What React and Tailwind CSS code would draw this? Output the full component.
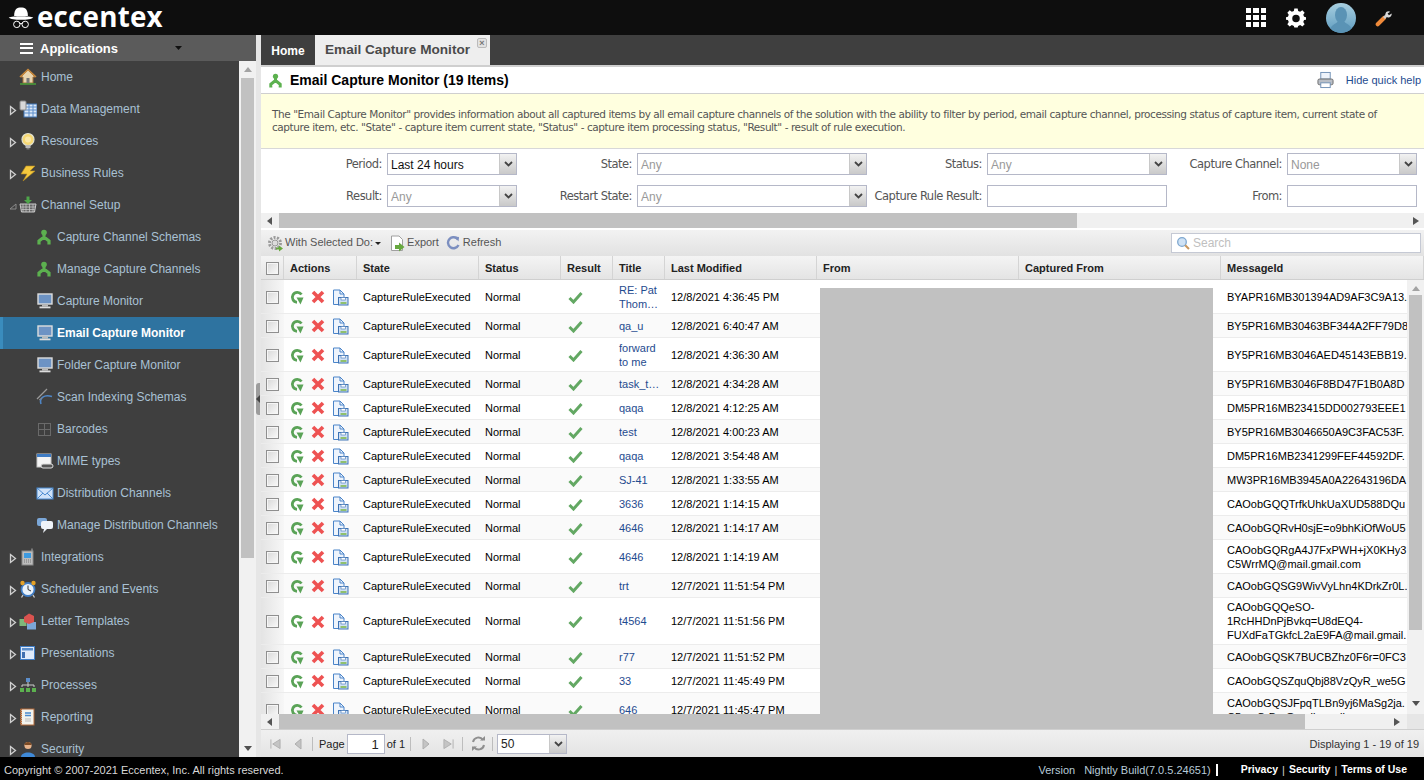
const F = "font-['Liberation_Sans',Arial,sans-serif]";

/* ---------- small drawn icons ---------- */
const Hat = () => (
  <svg width="26" height="25" viewBox="0 0 34 32" className="shrink-0">
    <path d="M8 14 C8 5 12 3 17 3 C22 3 26 5 26 14 Z" fill="#fff" />
    <path d="M1 16 C6 14 28 14 33 16 C30 20 4 20 1 16 Z" fill="#fff" />
    <circle cx="11.5" cy="25" r="4.2" fill="none" stroke="#fff" strokeWidth="1.3" />
    <circle cx="22.5" cy="25" r="4.2" fill="none" stroke="#fff" strokeWidth="1.3" />
    <path d="M15.5 24 H18.5" stroke="#fff" strokeWidth="1.3" />
  </svg>
);
const Arrow = ({ open }) =>
  open ? (
    <svg width="8" height="8" viewBox="0 0 8 8"><path d="M1 7 L7 2 V7 Z" fill="none" stroke="#8a8a8a" /></svg>
  ) : (
    <svg width="8" height="11" viewBox="0 0 8 11"><path d="M1.5 1.5 L6.5 5.5 L1.5 9.5 Z" fill="#4a4a4a" stroke="#d0d0d0" strokeWidth="1.3" /></svg>
  );
const Ico = ({ children }) => (
  <svg width="18" height="18" viewBox="0 0 18 18" className="shrink-0">{children}</svg>
);
const HomeI = () => (
  <Ico>
    <path d="M2 9 L9 2 L16 9 L14 9 L14 15 L4 15 L4 9 Z" fill="#e8d5b0" stroke="#a8753a" />
    <path d="M1 9 L9 1.5 L17 9" fill="none" stroke="#c98a3e" strokeWidth="1.6" />
    <rect x="7.5" y="10" width="3" height="5" fill="#777" />
    <path d="M1 16 H17" stroke="#4a9a3a" strokeWidth="1.6" />
  </Ico>
);
const DataI = () => (
  <Ico>
    <rect x="5" y="4" width="13" height="13" fill="#dbe8f7" stroke="#3f74b5" />
    <path d="M5 7 H18 M5 10 H18 M5 13 H18 M10 4 V17 M14 4 V17" stroke="#5c8ecb" />
    <rect x="1" y="1" width="6" height="9" rx="1" fill="#d8d8d8" stroke="#8a8a8a" />
  </Ico>
);
const BulbI = () => (
  <Ico>
    <circle cx="9" cy="7.5" r="6" fill="#f6d873" stroke="#e2e2d0" strokeWidth="1.2" />
    <circle cx="9" cy="7.5" r="3" fill="#fbe9a8" />
    <rect x="6.5" y="13" width="5" height="3" fill="#b8b8b8" />
    <rect x="7.5" y="16" width="3" height="1.5" fill="#777" />
  </Ico>
);
const BoltI = () => (
  <Ico>
    <path d="M7 2 H16 L11 7 H16 L4 17 L8 10 H2 Z" fill="#f5c93e" stroke="#b58a1e" strokeWidth=".6" />
  </Ico>
);
const BasketI = () => (
  <Ico>
    <path d="M1 8 H17 L15.5 16 H2.5 Z" fill="#666" stroke="#ccc" />
    <path d="M4 8 V16 M7 8 V16 M10.5 8 V16 M14 8 V16 M2 11 H16 M2.5 13.5 H15.5" stroke="#ccc" strokeWidth=".7" />
    <path d="M7.5 0.5 H10.5 V4 H13 L9 8 L5 4 H7.5 Z" fill="#4ea64a" />
  </Ico>
);
const SchemaI = ({ s = 16 }) => (
  <svg width={s} height={s} viewBox="0 0 16 16" className="shrink-0">
    <circle cx="8" cy="3.5" r="2.8" fill="#5cb14f" />
    <path d="M8 5 V8 M8 8 L3 12 V15.5 M8 8 L13 12 V15.5" fill="none" stroke="#5cb14f" strokeWidth="3.2" />
  </svg>
);
const MonitorI = () => (
  <Ico>
    <rect x="2" y="2" width="14" height="10" fill="#6d93c4" stroke="#ddd" strokeWidth="1.4" />
    <rect x="6" y="12.5" width="6" height="2" fill="#bbb" />
    <rect x="3.5" y="14.5" width="11" height="1.8" fill="#ddd" />
  </Ico>
);
const ScanI = () => (
  <Ico>
    <path d="M1 11 L11 1" stroke="#9a9a9a" strokeWidth="1.2" />
    <path d="M5 16 C3 10 8 6 16 8.5" fill="none" stroke="#4f86c6" strokeWidth="1.6" />
    <path d="M3 12 L6 10" stroke="#888" />
  </Ico>
);
const BarcodeI = () => (
  <Ico>
    <rect x="2.5" y="3.5" width="12" height="12" fill="none" stroke="#6a6a6a" />
    <path d="M8.5 3.5 V15.5 M2.5 9.5 H14.5" stroke="#6a6a6a" />
  </Ico>
);
const MimeI = () => (
  <Ico>
    <rect x="1" y="2" width="14" height="13" fill="#f4f4f4" stroke="#c8c8c8" />
    <rect x="1" y="2" width="14" height="3" fill="#3f7cc4" />
    <rect x="5" y="12" width="12" height="4" rx="2" fill="#555" stroke="#ddd" />
  </Ico>
);
const MailI = () => (
  <Ico>
    <rect x="1" y="4" width="16" height="11" fill="#cfe2f8" stroke="#4a8ad0" />
    <path d="M1 4 L9 11 L17 4 M1 15 L7 9 M17 15 L11 9" fill="none" stroke="#4a8ad0" />
  </Ico>
);
const ChatI = () => (
  <Ico>
    <rect x="1" y="2" width="10" height="8" rx="2" fill="#7ba7d8" />
    <rect x="5" y="5" width="12" height="8" rx="2" fill="#eef3f9" />
    <path d="M8 13 L7 17 L11 13 Z" fill="#eef3f9" />
  </Ico>
);
const PhoneI = () => (
  <Ico>
    <rect x="3" y="3" width="11" height="14" fill="#bdbdbd" stroke="#8a8a8a" />
    <rect x="5" y="5" width="7" height="5" fill="#3d9ae0" />
    <path d="M5 12 H12 M5 14 H12" stroke="#777" strokeDasharray="1 1" />
    <path d="M13 3 V0.5" stroke="#999" strokeWidth="1.3" />
  </Ico>
);
const ClockI = () => (
  <Ico>
    <circle cx="9" cy="9.5" r="6.5" fill="#e9f2fb" stroke="#3f7cc4" strokeWidth="1.8" />
    <path d="M9 5.5 V9.5 L12 11" fill="none" stroke="#333" />
    <circle cx="3.5" cy="3" r="2.2" fill="#e5a227" />
    <circle cx="14.5" cy="3" r="2.2" fill="#e5a227" />
    <path d="M4 15 L2.5 17.5 M14 15 L15.5 17.5" stroke="#ccc" strokeWidth="1.3" />
  </Ico>
);
const CubesI = () => (
  <Ico>
    <rect x="0.5" y="7" width="7" height="7" fill="#7fb77a" />
    <rect x="8" y="10" width="9" height="7.5" fill="#7ba7d8" />
    <path d="M5 5 L10 1.5 L15 4 L15 10 L10 12 L5 10 Z" fill="#d9534f" />
  </Ico>
);
const PresI = () => (
  <Ico>
    <rect x="1.5" y="2.5" width="14" height="13" fill="#dfeafa" stroke="#3f7cc4" />
    <rect x="3" y="4" width="11" height="2.5" fill="#5c8ecb" />
    <rect x="3" y="8" width="3" height="6" fill="#3f6fb0" />
  </Ico>
);
const ProcI = () => (
  <Ico>
    <rect x="7" y="2" width="4" height="4" fill="#5c8ecb" />
    <path d="M9 6 V9 M3 11 V9 H15 V11 M9 9 V11" fill="none" stroke="#ccc" />
    <rect x="1" y="12" width="4" height="4" fill="#5cb14f" />
    <rect x="7" y="12" width="4" height="4" fill="#5cb14f" />
    <rect x="13" y="12" width="4" height="4" fill="#5cb14f" />
  </Ico>
);
const BookI = () => (
  <Ico>
    <rect x="2" y="1" width="13" height="16" fill="#f3f3ee" stroke="#b26a3a" />
    <path d="M2 1 V17" stroke="#b26a3a" strokeWidth="2" strokeDasharray="1 1" />
    <path d="M6 5 H12 M6 7.5 H12" stroke="#4a8ad0" strokeWidth="1.3" />
    <path d="M6 11 H12 M6 13 H12" stroke="#bbb" />
  </Ico>
);
const UserI = () => (
  <Ico>
    <circle cx="9" cy="5.5" r="3.6" fill="#e8b48c" />
    <path d="M5.4 5 C5.4 1 12.6 1 12.6 5 Z" fill="#7b4a24" />
    <path d="M2 17 C2 11 16 11 16 17 Z" fill="#3f8ad8" />
  </Ico>
);

/* grid action icons */
const Rerun = () => (
  <svg width="14" height="15" viewBox="0 0 14 15" className="shrink-0 mt-[1px]">
    <path d="M11.5 4.5 A5 5 0 1 0 7 12.3" fill="none" stroke="#5aa357" strokeWidth="2.8" />
    <path d="M6.5 7.5 H13.5 L10.5 14.5 Z" fill="#5aa357" />
  </svg>
);
const Del = () => (
  <svg width="14" height="14" viewBox="0 0 14 14" className="shrink-0 mt-[1px]">
    <path d="M2 2 L12 12 M12 2 L2 12" stroke="#ee5252" strokeWidth="3.6" />
  </svg>
);
const Save = () => (
  <svg width="17" height="17" viewBox="0 0 17 17" className="shrink-0 mt-[1px]">
    <path d="M1.5 1 H8 L12 5 V15.5 H1.5 Z" fill="#eef4fc" stroke="#4a84c9" />
    <path d="M8 1 V5 H12" fill="none" stroke="#4a84c9" />
    <rect x="6.5" y="8.5" width="9.5" height="7.5" fill="#cfe0f5" stroke="#3f74b5" />
    <rect x="9" y="8.5" width="4.5" height="2.5" fill="#fff" stroke="#3f74b5" strokeWidth=".6" />
    <rect x="8.5" y="13" width="6" height="2" fill="#8fc06d" />
  </svg>
);
const Check = () => (
  <svg width="15" height="13" viewBox="0 0 15 13" className="shrink-0 mt-[1px]">
    <path d="M1.5 7 L5.5 11 L13.5 2" fill="none" stroke="#63a863" strokeWidth="3" />
  </svg>
);
const Box = () => (
  <span className="block mt-[1px] w-[13px] h-[13px] border border-[#8f8f8f] bg-gradient-to-br from-[#d8d8d8] to-[#fafafa] shadow-[inset_0_0_0_1px_#f6f6f6]" />
);
const Chev = () => (
  <svg width="9" height="6" viewBox="0 0 9 6"><path d="M1 1 L4.5 4.5 L8 1" fill="none" stroke="#444" strokeWidth="1.8" /></svg>
);

/* ---------- sidebar ---------- */
const menu = [
  ["Home", 0, null, HomeI],
  ["Data Management", 0, "c", DataI],
  ["Resources", 0, "c", BulbI],
  ["Business Rules", 0, "c", BoltI],
  ["Channel Setup", 0, "o", BasketI],
  ["Capture Channel Schemas", 1, null, SchemaI],
  ["Manage Capture Channels", 1, null, SchemaI],
  ["Capture Monitor", 1, null, MonitorI],
  ["Email Capture Monitor", 1, null, MonitorI, true],
  ["Folder Capture Monitor", 1, null, MonitorI],
  ["Scan Indexing Schemas", 1, null, ScanI],
  ["Barcodes", 1, null, BarcodeI],
  ["MIME types", 1, null, MimeI],
  ["Distribution Channels", 1, null, MailI],
  ["Manage Distribution Channels", 1, null, ChatI],
  ["Integrations", 0, "c", PhoneI],
  ["Scheduler and Events", 0, "c", ClockI],
  ["Letter Templates", 0, "c", CubesI],
  ["Presentations", 0, "c", PresI],
  ["Processes", 0, "c", ProcI],
  ["Reporting", 0, "c", BookI],
  ["Security", 0, "c", UserI],
];

const MenuRow = ({ label, child, arrow, Icon, active }) => (
  <div
    className={`h-[32px] shrink-0 flex items-center text-[12px] ${
      active ? "bg-[#2e73a0] border-l-[3px] border-[#3a8cbd] text-white font-bold" : "text-[#a9c1d4]"
    } ${child ? (active ? "pl-[33px]" : "pl-[36px]") : "pl-[9px]"}`}
  >
    {!child && (
      <span className="w-[9px] mr-[1px] flex items-center justify-start mt-[2px]">
        {arrow && <Arrow open={arrow === "o"} />}
      </span>
    )}
    <span className="w-[21px] mr-[0px] flex items-center">
      <Icon />
    </span>
    <span className={`whitespace-nowrap -mt-[1px] ${child ? "" : "ml-[1px]"}`}>{label}</span>
  </div>
);

/* ---------- grid data ---------- */
const rows = [
  [34, ["RE: Pat", "Thom…"], "12/8/2021 4:36:45 PM", ["BYAPR16MB301394AD9AF3C9A13."]],
  [24, ["qa_u"], "12/8/2021 6:40:47 AM", ["BY5PR16MB30463BF344A2FF79D8"]],
  [34, ["forward", "to me"], "12/8/2021 4:36:30 AM", ["BY5PR16MB3046AED45143EBB19."]],
  [24, ["task_t…"], "12/8/2021 4:34:28 AM", ["BY5PR16MB3046F8BD47F1B0A8D"]],
  [24, ["qaqa"], "12/8/2021 4:12:25 AM", ["DM5PR16MB23415DD002793EEE1"]],
  [24, ["test"], "12/8/2021 4:00:23 AM", ["BY5PR16MB3046650A9C3FAC53F."]],
  [24, ["qaqa"], "12/8/2021 3:54:48 AM", ["DM5PR16MB2341299FEF44592DF."]],
  [24, ["SJ-41"], "12/8/2021 1:33:55 AM", ["MW3PR16MB3945A0A22643196DA"]],
  [24, ["3636"], "12/8/2021 1:14:15 AM", ["CAOobGQQTrfkUhkUaXUD588DQu"]],
  [24, ["4646"], "12/8/2021 1:14:17 AM", ["CAOobGQRvH0sjE=o9bhKiOfWoU5"]],
  [34, ["4646"], "12/8/2021 1:14:19 AM", ["CAOobGQRgA4J7FxPWH+jX0KHy3", "C5WrrMQ@mail.gmail.com"]],
  [24, ["trt"], "12/7/2021 11:51:54 PM", ["CAOobGQSG9WivVyLhn4KDrkZr0L."]],
  [47, ["t4564"], "12/7/2021 11:51:56 PM", ["CAOobGQQeSO-", "1RcHHDnPjBvkq=U8dEQ4-", "FUXdFaTGkfcL2aE9FA@mail.gmail."]],
  [24, ["r77"], "12/7/2021 11:51:52 PM", ["CAOobGQSK7BUCBZhz0F6r=0FC3"]],
  [24, ["33"], "12/7/2021 11:45:49 PM", ["CAOobGQSZquQbj88VzQyR_we5G"]],
  [34, ["646"], "12/7/2021 11:45:47 PM", ["CAOobGQSJFpqTLBn9yj6MaSg2ja.", "C5m+O-Bw@mail.gmail.com"]],
];

const cols = [
  ["", 23],
  ["Actions", 73],
  ["State", 122],
  ["Status", 82],
  ["Result", 52],
  ["Title", 52],
  ["Last Modified", 152],
  ["From", 202],
  ["Captured From", 202],
  ["MessageId", 203],
];

const Row = ({ r, i }) => (
  <div
    style={{ height: r[0] }}
    className={`flex shrink-0 border-b border-[#ececec] text-[11px] leading-[14px] text-black ${i % 2 ? "bg-[#fafafa]" : "bg-white"}`}
  >
    <div className="w-[23px] shrink-0 flex items-center justify-center bg-gradient-to-r from-[#e4e4e4] to-[#f7f7f7]"><Box /></div>
    <div className="w-[73px] shrink-0 flex items-center pl-[6px] gap-[7px]"><Rerun /><Del /><Save /></div>
    <div className="w-[122px] shrink-0 flex items-center pl-[6px]">CaptureRuleExecuted</div>
    <div className="w-[82px] shrink-0 flex items-center pl-[6px]">Normal</div>
    <div className="w-[52px] shrink-0 flex items-center pl-[7px]"><Check /></div>
    <div className="w-[52px] shrink-0 flex flex-col justify-center pl-[6px] text-[#1f4b8f]">
      {r[1].map((t) => <span key={t} className="whitespace-nowrap">{t}</span>)}
    </div>
    <div className="w-[152px] shrink-0 flex items-center pl-[6px]">{r[2]}</div>
    <div className="w-[202px] shrink-0" />
    <div className="w-[202px] shrink-0" />
    <div className="w-[203px] shrink-0 flex flex-col justify-center pl-[6px] overflow-hidden">
      {r[3].map((t) => <span key={t} className="whitespace-nowrap">{t}</span>)}
    </div>
  </div>
);

/* ---------- filter fields ---------- */
const LBL = "text-[#555] text-[11.5px] text-right shrink-0 mr-[5px] pt-[1px] whitespace-nowrap font-['DejaVu_Sans',sans-serif] tracking-[-0.5px]";
const Field = ({ label, lw, w, value, combo, dark }) => (
  <div className="flex items-center">
    <span style={{ width: lw }} className={LBL}>{label}</span>
    <div style={{ width: w }} className="h-[22px] border border-[#b5b8c8] bg-white flex items-center text-[12px] overflow-hidden">
      <span className={`pl-[3px] pt-[1px] flex-1 whitespace-nowrap ${dark ? "text-[#111]" : "text-[#999]"}`}>{value}</span>
      {combo && (
        <span className="w-[17px] h-full flex items-center justify-center bg-gradient-to-b from-[#f2f2f2] to-[#c9c9c9] border-l border-[#c8c8c8]"><Chev /></span>
      )}
    </div>
  </div>
);

const HScroll = ({ thumbL, thumbW, right }) => (
  <div className="h-[15px] bg-[#f0f0f0] relative shrink-0">
    <svg width="6" height="8" viewBox="0 0 6 8" className="absolute left-[6px] top-[4px]"><path d="M5 0 V8 L0 4 Z" fill="#555" /></svg>
    <div style={{ left: thumbL, width: thumbW }} className="absolute top-0 bottom-0 bg-[#c1c1c1]" />
    <svg width="6" height="8" viewBox="0 0 6 8" style={{ right }} className="absolute top-[4px]"><path d="M0 0 V8 L6 4 Z" fill="#555" /></svg>
  </div>
);

const Sep = ({ ml }) => <span style={{ marginLeft: ml }} className="w-px h-[14px] bg-[#bdbdbd] shrink-0" />;

export default function App() {
  return (
    <div className={`w-[1424px] h-[780px] overflow-hidden flex flex-col ${F} text-[12px] bg-[#3f3f3f]`}>
      {/* top bar */}
      <header className="h-[35px] shrink-0 bg-[#0e0e0e] flex items-center pl-[8px] pr-[31px]">
        <Hat />
        <span className="ml-[3px] text-white text-[27.8px] leading-[31px] font-bold font-['Open_Sans',sans-serif] -mt-[2px] tracking-[0.2px]">eccentex</span>
        <div className="ml-auto flex items-center">
          <div className="grid grid-cols-3 gap-[2px] w-[20px]">
            {Array.from({ length: 9 }).map((_, i) => <span key={i} className="h-[5.33px] bg-white" />)}
          </div>
          <svg width="20" height="20" viewBox="0 0 24 24" className="ml-[20px]">
            <path fill="#fff" d="M10 1 H14 L14.6 4 L17 5 L19.6 3.3 L22.4 6.1 L20.7 8.7 L21.7 11 L24 11.5 V14.5 L21.7 15 L20.7 17.3 L22.4 19.9 L19.6 22.7 L17 21 L14.6 22 L14 24 H10 L9.4 22 L7 21 L4.4 22.7 L1.6 19.9 L3.3 17.3 L2.3 15 L0 14.5 V11.5 L2.3 11 L3.3 8.7 L1.6 6.1 L4.4 3.3 L7 5 L9.4 4 Z M12 8.5 A4.5 4.5 0 1 0 12 17.5 A4.5 4.5 0 1 0 12 8.5 Z" fillRule="evenodd" transform="translate(0,-0.5)" />
          </svg>
          <svg width="30" height="30" viewBox="0 0 30 30" className="ml-[20px]">
            <defs>
              <linearGradient id="av" x1="0" y1="0" x2="0" y2="1">
                <stop offset="0" stopColor="#a8cfe0" /><stop offset="1" stopColor="#5f9cbf" />
              </linearGradient>
              <clipPath id="avc"><circle cx="15" cy="15" r="15" /></clipPath>
            </defs>
            <circle cx="15" cy="15" r="15" fill="url(#av)" />
            <g clipPath="url(#avc)" fill="#5a93b5">
              <ellipse cx="15" cy="12" rx="6" ry="8" />
              <path d="M3 30 C4 21 11 21 12 18 H18 C19 21 26 21 27 30 Z" />
            </g>
          </svg>
          <svg width="18" height="18" viewBox="0 0 20 20" className="ml-[19px]">
            <path d="M3 17 L10 10" stroke="#ef8a3a" strokeWidth="4.5" strokeLinecap="round" />
            <path d="M10 10 L13 7" stroke="#ccc" strokeWidth="3" />
            <path d="M11.5 6 C11.5 3 14.5 1.5 17 3 L14 5 L15.5 7 L18.5 5 C19 8.5 15 10.5 13 9 Z" fill="#d9d9d9" />
          </svg>
        </div>
      </header>

      <div className="flex-1 flex min-h-0">
        {/* sidebar */}
        <aside className="w-[256px] shrink-0 flex flex-col bg-[#3f3f3f]">
          <div className="h-[26px] shrink-0 bg-[#5b5b5b] flex items-center pl-[20px] text-white font-bold text-[13px]">
            <span className="flex flex-col gap-[2.5px] w-[13px]">
              <i className="block h-[2px] bg-white" /><i className="block h-[2px] bg-white" /><i className="block h-[2px] bg-white" />
            </span>
            <span className="ml-[7px] pt-[2px]">Applications</span>
            <svg width="7" height="4" viewBox="0 0 7 4" className="ml-[57px]"><path d="M0 0 H7 L3.5 4 Z" fill="#111" /></svg>
          </div>
          <div className="flex-1 flex min-h-0">
            <nav className="w-[239px] shrink-0 flex flex-col overflow-hidden">
              {menu.map((m) => (
                <MenuRow key={m[0]} label={m[0]} child={m[1]} arrow={m[2]} Icon={m[3]} active={m[4]} />
              ))}
            </nav>
            <div className="w-[17px] bg-[#f1f1f1] flex flex-col items-center py-[6px] relative">
              <svg width="8" height="5" viewBox="0 0 8 5"><path d="M0 5 L4 0 L8 5 Z" fill="#a3a3a3" /></svg>
              <div className="w-[13px] h-[480px] bg-[#c1c1c1] mt-[6px]" />
              <svg width="8" height="5" viewBox="0 0 8 5" className="absolute bottom-[6px]"><path d="M0 0 L8 0 L4 5 Z" fill="#505050" /></svg>
            </div>
          </div>
        </aside>

        {/* splitter */}
        <div className="w-[5px] shrink-0 bg-[#e6e6e6] relative">
          <span className="absolute left-0 top-[348px] w-[4px] h-[32px] bg-[#9c9c9c] rounded-l-[3px] flex items-center">
            <svg width="4" height="8" viewBox="0 0 4 8"><path d="M4 0 V8 L0 4 Z" fill="#444" /></svg>
          </span>
        </div>

        {/* main */}
        <main className="flex-1 min-w-0 flex flex-col bg-white relative">
          {/* tabs */}
          <div className="h-[30px] shrink-0 bg-[#3f3f3f] flex items-end">
            <div className="w-[54px] h-[29px] flex items-center justify-center text-white font-bold text-[12px]">Home</div>
            <div className="w-[175px] h-[30px] bg-[#eeeeee] flex pl-[10px] relative items-center text-[#4a4a4a] font-bold text-[13.6px] whitespace-nowrap">
              Email Capture Monitor
              <span className="absolute right-[3px] top-[3px] w-[10px] h-[10px] rounded-[2px] border border-[#bbb] bg-[#e2e2e2] text-[#777] text-[9px] leading-[8px] text-center font-bold">×</span>
            </div>
          </div>
          <div className="h-[2px] shrink-0 bg-[#cfcfcf]" />

          {/* title */}
          <div className="h-[27px] shrink-0 flex items-center pl-[7px] pr-[3px] border-b border-[#cfcfcf]">
            <SchemaI s={15} />
            <span className="ml-[7px] text-[14px] font-bold text-black">Email Capture Monitor (19 Items)</span>
            <svg width="17" height="18" viewBox="0 0 18 18" className="ml-auto">
              <rect x="4" y="1" width="10" height="7" fill="#eef3fa" stroke="#6f8fb5" />
              <rect x="1" y="8" width="16" height="6" rx="1.5" fill="#b9bec6" stroke="#6a6a6a" />
              <rect x="4" y="12" width="10" height="5" fill="#fff" stroke="#6f8fb5" />
            </svg>
            <span className="ml-[12px] text-[11px] text-[#1f4b8f]">Hide quick help</span>
          </div>

          {/* help */}
          <div className="h-[55px] shrink-0 bg-[#ffffdf] border-b border-[#d8d8d8] pl-[11px] pr-[30px] pt-[14px] text-[#555] text-[10.5px] leading-[13px] font-['DejaVu_Sans',sans-serif] tracking-[-0.42px]">
            The "Email Capture Monitor" provides information about all captured items by all email capture channels of the solution with the ability to filter by period, email capture channel, processing status of capture item, current state of capture item, etc. "State" - capture item current state, "Status" - capture item processing status, "Result" - result of rule execution.
          </div>

          {/* filters */}
          <div className="h-[64px] shrink-0 bg-white flex flex-col pt-[4px] gap-[10px]">
            <div className="flex">
              <Field label="Period:" lw={121} w={130} value="Last 24 hours" combo dark />
              <Field label="State:" lw={115} w={230} value="Any" combo />
              <Field label="Status:" lw={115} w={180} value="Any" combo />
              <Field label="Capture Channel:" lw={115} w={130} value="None" combo />
            </div>
            <div className="flex">
              <Field label="Result:" lw={121} w={130} value="Any" combo />
              <Field label="Restart State:" lw={115} w={230} value="Any" combo />
              <Field label="Capture Rule Result:" lw={115} w={180} value="" />
              <Field label="From:" lw={115} w={130} value="" />
            </div>
          </div>

          <HScroll thumbL={18} thumbW={798} right={5} />

          {/* toolbar */}
          <div className="mt-[2px] h-[26px] shrink-0 bg-gradient-to-b from-[#f2f2f2] to-[#e2e2e2] flex items-center pl-[6px] pr-[3px] text-[#555] text-[11px]">
            <svg width="17" height="17" viewBox="0 0 17 17">
              <circle cx="8" cy="8" r="5.5" fill="none" stroke="#9a9a9a" strokeWidth="3" strokeDasharray="2 1.4" />
              <circle cx="8" cy="8" r="3" fill="#dcdcdc" stroke="#999" />
              <path d="M9 12.5 H12 V10.5 L16 13.5 L12 16.5 V14.5 H9 Z" fill="#67a83f" />
            </svg>
            <span className="ml-[1px] -mt-[1px]">With Selected Do:</span>
            <svg width="6" height="3" viewBox="0 0 6 3" className="ml-[2px]"><path d="M0 0 H6 L3 3 Z" fill="#222" /></svg>
            <svg width="16" height="17" viewBox="0 0 16 17" className="ml-[9px]">
              <path d="M1.5 1 H9 L12.5 4.5 V15.5 H1.5 Z" fill="#fff" stroke="#a0a0a0" />
              <path d="M5 10 H9 V7.5 L14.5 12 L9 16.5 V14 H5 Z" fill="#67a83f" />
            </svg>
            <span className="ml-[1px] -mt-[1px]">Export</span>
            <svg width="15" height="15" viewBox="0 0 15 15" className="ml-[7px]">
              <path d="M12 3.5 A5.5 5.5 0 1 0 12.5 9" fill="none" stroke="#7c8fc0" strokeWidth="2.4" />
              <path d="M8.5 0.5 L13 1 L12.5 5.5 Z" fill="#7c8fc0" />
            </svg>
            <span className="ml-[2px] -mt-[1px]">Refresh</span>
            <div className="ml-auto w-[250px] h-[20px] bg-white border border-[#c5c9d4] flex items-center pl-[4px] text-[#c0c0c0] text-[12px]">
              <svg width="14" height="14" viewBox="0 0 14 14">
                <circle cx="6" cy="6" r="4.3" fill="#cfe2f5" stroke="#7ea7d0" strokeWidth="1.3" />
                <path d="M9.2 9.2 L13 13" stroke="#c9975f" strokeWidth="2" />
              </svg>
              <span className="ml-[3px]">Search</span>
            </div>
          </div>

          {/* grid */}
          <div className="flex-1 min-h-0 relative overflow-hidden bg-white">
            <div className="h-[24px] flex bg-gradient-to-b from-[#f4f4f4] to-[#e4e4e4] border-b border-[#cfcfcf] text-[11px] font-bold text-[#222]">
              {cols.map(([t, w], i) => (
                <div key={i} style={{ width: w }} className={`shrink-0 flex items-center pt-[1px] border-r border-[#d4d4d4] ${i === 0 ? "justify-center" : "pl-[6px]"}`}>
                  {i === 0 ? <Box /> : t}
                </div>
              ))}
            </div>
            <div className="flex flex-col">
              {rows.map((r, i) => <Row key={i} r={r} i={i} />)}
            </div>
            {/* masked block */}
            <div className="absolute left-[559px] top-[32px] w-[393px] h-[500px] bg-[#c1c1c1]" />
            {/* vertical scrollbar */}
            <div className="absolute right-0 top-[24px] bottom-[0px] w-[17px] bg-[#f1f1f1] flex flex-col items-center pt-[6px]">
              <svg width="8" height="5" viewBox="0 0 8 5"><path d="M0 5 L4 0 L8 5 Z" fill="#a3a3a3" /></svg>
              <div className="w-[13px] h-[335px] bg-[#c1c1c1] mt-[4px]" />
              <svg width="8" height="5" viewBox="0 0 8 5" className="absolute bottom-[23px]"><path d="M0 0 L8 0 L4 5 Z" fill="#505050" /></svg>
            </div>
            <div className="absolute left-0 right-0 bottom-0">
              <HScroll thumbL={18} thumbW={1026} right={24} />
            </div>
            <div className="absolute right-0 bottom-0 w-[17px] h-[15px] bg-[#e6e6e6]" />
          </div>

          {/* pager */}
          <div className="h-[28px] shrink-0 border-t border-[#cfcfcf] bg-gradient-to-b from-[#f0f0f0] to-[#e4e4e4] flex items-center pl-[9px] pr-[5px] text-[#222] text-[11px]">
            <svg width="11" height="12" viewBox="0 0 12 12"><path d="M1 1 V11 M11 1 V11 L3 6 Z" fill="#c4c4c4" stroke="#aeaeae" /></svg>
            <svg width="8" height="12" viewBox="0 0 8 12" className="ml-[13px]"><path d="M7 1 V11 L1 6 Z" fill="#c4c4c4" stroke="#aeaeae" /></svg>
            <Sep ml={10} />
            <span className="ml-[6px] pt-[2px]">Page</span>
            <span className="ml-[2px] w-[38px] h-[20px] bg-white border border-[#b5b8c8] text-right pr-[5px] text-[13px] leading-[19px]">1</span>
            <span className="ml-[2px] pt-[2px]">of 1</span>
            <Sep ml={5} />
            <svg width="8" height="12" viewBox="0 0 8 12" className="ml-[11px]"><path d="M1 1 V11 L7 6 Z" fill="#c4c4c4" stroke="#aeaeae" /></svg>
            <svg width="11" height="12" viewBox="0 0 12 12" className="ml-[13px]"><path d="M11 1 V11 M1 1 V11 L9 6 Z" fill="#c4c4c4" stroke="#aeaeae" /></svg>
            <Sep ml={8} />
            <svg width="15" height="15" viewBox="0 0 15 15" className="ml-[8px]">
              <path d="M2 6 A5.5 5.5 0 0 1 12 4" fill="none" stroke="#8f8f8f" strokeWidth="2" />
              <path d="M13 9 A5.5 5.5 0 0 1 3 11" fill="none" stroke="#8f8f8f" strokeWidth="2" />
              <path d="M9 4.5 H14 V0 Z M6 10.5 H1 V15 Z" fill="#8f8f8f" />
            </svg>
            <Sep ml={6} />
            <div className="ml-[4px] w-[70px] h-[20px] bg-white border border-[#b5b8c8] flex items-center text-[12px] overflow-hidden">
              <span className="flex-1 pl-[3px] pt-[1px]">50</span>
              <span className="w-[17px] h-full flex items-center justify-center bg-gradient-to-b from-[#f2f2f2] to-[#c9c9c9] border-l border-[#c8c8c8]"><Chev /></span>
            </div>
            <span className="ml-auto pt-[2px] text-[#333] text-[11px]">Displaying 1 - 19 of 19</span>
          </div>
        </main>
      </div>

      {/* footer */}
      <footer className="h-[23px] shrink-0 bg-black flex items-center pt-[3px] pl-[4px] pr-[17px] text-[11px] text-[#d8d8d8]">
        <span>Copyright © 2007-2021 Eccentex, Inc. All rights reserved.</span>
        <div className="ml-auto flex items-center">
          <span className="text-[#b8cbd8]">Version</span>
          <span className="ml-[9px] text-[#b8cbd8]">Nightly Build(7.0.5.24651)</span>
          <span className="ml-[5px] w-[2px] h-[12px] bg-white" />
          <span className="ml-[23px] font-bold text-white text-[10.5px]">Privacy</span>
          <span className="mx-[4px] text-[#ccc]">|</span>
          <span className="font-bold text-white text-[10.5px]">Security</span>
          <span className="mx-[4px] text-[#ccc]">|</span>
          <span className="font-bold text-white text-[10.5px]">Terms of Use</span>
        </div>
      </footer>
    </div>
  );
}
